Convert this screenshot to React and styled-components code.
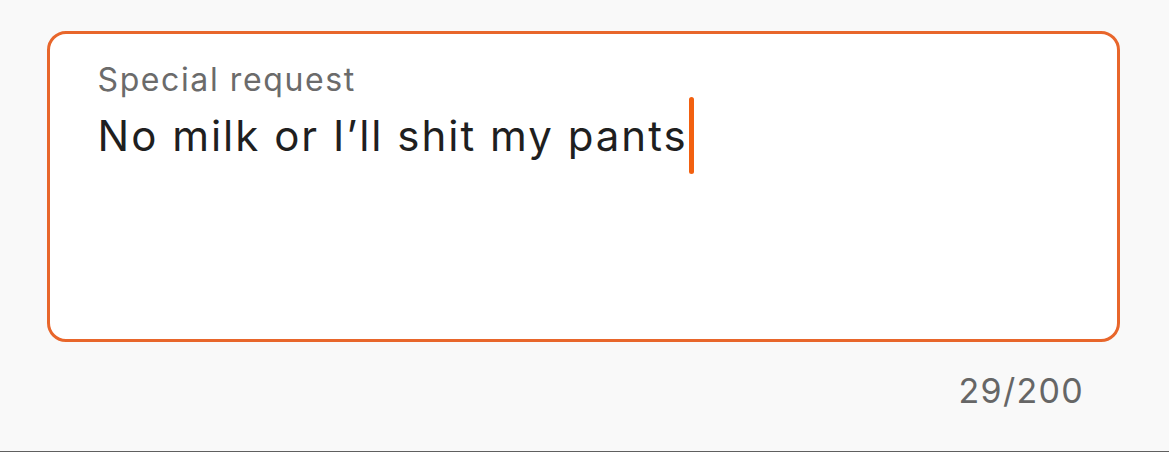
import React from 'react';
import styled, { createGlobalStyle } from 'styled-components';

const GlobalStyle = createGlobalStyle`
    html, body {
        margin: 0;
        padding: 0;
        background: #f9f9f9;
    }
    body {
        font-family: Inter, "Noto Sans", sans-serif;
    }
`;

const Page = styled.div`
    box-sizing: border-box;
    height: 452px;
    padding: 31px 49px 0 47px;
    border-bottom: 1px solid #5f5f5f;
    display: flex;
    flex-direction: column;
`;

const Field = styled.div`
    box-sizing: border-box;
    height: 311px;
    padding: 27.5px 47.5px;
    background: #ffffff;
    border: 3px solid #e8662b;
    border-radius: 19px;
    display: flex;
    flex-direction: column;
`;

const Label = styled.div`
    color: #6b6b6b;
    font-size: 32px;
    line-height: 36px;
    letter-spacing: 1.6px;
`;

const ValueRow = styled.div`
    display: flex;
    align-items: center;
    margin-top: 13px;
    color: #1f1f1f;
    font-size: 42px;
    line-height: 50px;
    height: 50px;
    letter-spacing: 2px;
`;

const Caret = styled.span`
    flex: none;
    display: inline-block;
    width: 5.5px;
    height: 77px;
    margin-left: 1px;
    border-radius: 3px;
    background: ${({ color }) => color};
`;

const Counter = styled.div`
    align-self: flex-end;
    margin-top: 29px;
    margin-right: 36px;
    color: #666666;
    font-size: 34px;
    line-height: 40px;
    letter-spacing: 1.3px;
`;

const SpecialRequest = ({ label, value, max }) => (
    <Page>
        <Field>
            <Label>{label}</Label>
            <ValueRow>
                <span>{value}</span>
                <Caret color="#f2600f" />
            </ValueRow>
        </Field>
        <Counter>{`${value.length}/${max}`}</Counter>
    </Page>
);

const App = () => (
    <>
        <GlobalStyle />
        <SpecialRequest
            label="Special request"
            value="No milk or I’ll shit my pants"
            max={200}
        />
    </>
);

export default App;
